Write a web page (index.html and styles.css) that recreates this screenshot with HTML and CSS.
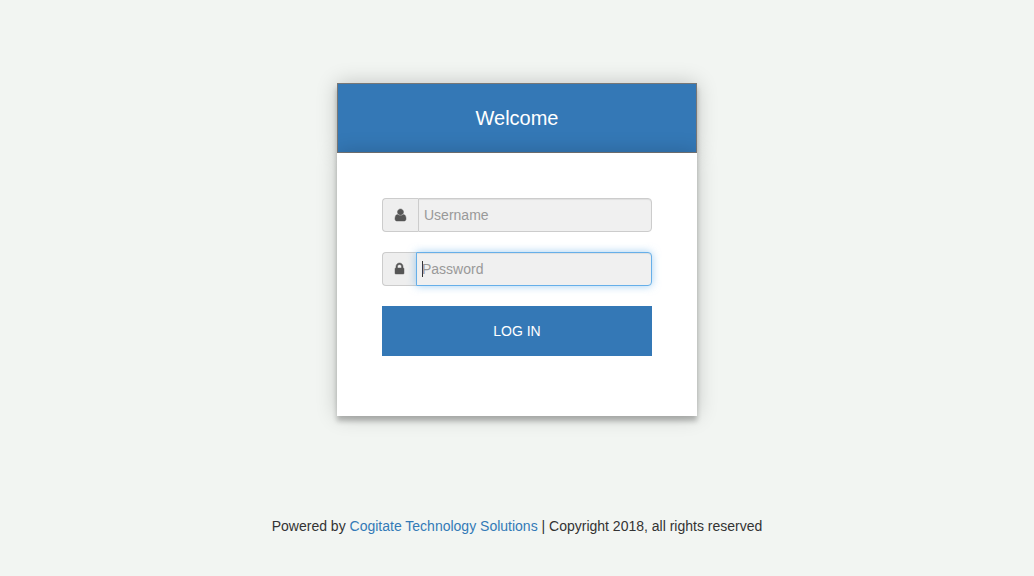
FILE: index.html
```html
<!DOCTYPE html>
<html lang="en">
<head>
<meta charset="utf-8">
<meta name="viewport" content="width=device-width, initial-scale=1">
<title>Welcome</title>
<link rel="stylesheet" href="styles.css">
</head>
<body>
<main class="login">
  <h1 class="login-header">Welcome</h1>
  <form class="login-form">
    <div class="field">
      <label class="addon" for="username" aria-label="Username">
        <svg class="icon-user" viewBox="192 128 1408 1536" aria-hidden="true"><path d="M1600 1405q0 120-73 189.500t-194 69.500h-874q-121 0-194-69.500t-73-189.500q0-53 3.500-103.500t14-109 26.500-108.500 43-97.500 62-81 85.500-53.500 111.500-20q9 0 42 21.500t74.500 48 108 48 133.500 21.500 133.500-21.500 108-48 74.500-48 42-21.500q61 0 111.500 20t85.500 53.500 62 81 43 97.500 26.500 108.500 14 109 3.500 103.500zm-320-893q0 159-112.500 271.500t-271.500 112.500-271.500-112.500-112.500-271.500 112.500-271.500 271.500-112.500 271.500 112.500 112.500 271.500z"/></svg>
      </label>
      <input class="control" id="username" type="text" placeholder="Username">
    </div>
    <div class="field">
      <label class="addon" for="password" aria-label="Password">
        <svg class="icon-lock" viewBox="320 128 1152 1408" aria-hidden="true"><path d="M640 768h512v-192q0-106-75-181t-181-75-181 75-75 181v192zm832 96v576q0 40-28 68t-68 28h-960q-40 0-68-28t-28-68v-576q0-40 28-68t68-28h32v-192q0-184 132-316t316-132 316 132 132 316v192h32q40 0 68 28t28 68z"/></svg>
      </label>
      <input class="control" id="password" type="password" placeholder="Password" autofocus>
    </div>
    <button class="submit" type="submit">LOG IN</button>
  </form>
</main>
<footer class="footer">Powered by <a class="footer-link" href="#">Cogitate Technology Solutions</a> | Copyright 2018, all rights reserved</footer>
</body>
</html>
```
FILE: styles.css
```css
* {
  box-sizing: border-box;
}

body {
  margin: 0;
  padding: 83px 16px 40px;
  background: #f2f5f2;
  color: #333;
  font: 14px/20px "Liberation Sans", Arial, sans-serif;
}

.login {
  max-width: 360px;
  margin: 0 auto 100px;
}

.login-header,
.login-form {
  box-shadow: 0 0 20px rgba(0, 0, 0, 0.2), 0 5px 5px rgba(0, 0, 0, 0.24);
}

.login-header {
  margin: 0;
  padding: 24px 16px;
  border: 1px solid #777;
  background: #3478b6;
  color: #fff;
  font-size: 20px;
  font-weight: 400;
  line-height: 20px;
  text-align: center;
}

.login-form {
  display: flex;
  flex-direction: column;
  gap: 20px;
  padding: 45px 45px 60px;
  background: #fff;
}

.field {
  display: flex;
  height: 34px;
}

.addon {
  display: flex;
  align-items: center;
  padding: 0 12px;
  border: 1px solid #ccc;
  border-right: 0;
  border-radius: 4px 0 0 4px;
  background: #eee;
}

.icon-user,
.icon-lock {
  display: block;
  overflow: visible;
  fill: #555;
  stroke: #555;
  stroke-width: 60;
}

.icon-user {
  width: 11px;
  height: 12px;
}

.icon-lock {
  width: 9px;
  height: 11px;
  margin-bottom: 1px;
}

.control {
  flex: 1;
  min-width: 0;
  padding: 0 5px;
  border: 1px solid #ccc;
  border-radius: 0 4px 4px 0;
  outline: 0;
  background: #f0f0f0;
  box-shadow: inset 0 1px 1px rgba(0, 0, 0, 0.075);
  color: #333;
  font: inherit;
}

.control::placeholder {
  color: #999;
  opacity: 1;
}

.control:focus {
  border-color: #66afe9;
  box-shadow: inset 0 1px 1px rgba(0, 0, 0, 0.075), 0 0 8px rgba(102, 175, 233, 0.6);
}

/* Steady caret while the focused field is empty */
.control:focus:placeholder-shown {
  background: #f0f0f0 linear-gradient(#333, #333) 5px center / 1px 16px no-repeat;
  caret-color: transparent;
}

.submit {
  padding: 15px;
  border: 0;
  border-radius: 0;
  background: #3478b6;
  color: #fff;
  font: inherit;
  cursor: pointer;
}

.footer {
  padding: 0 16px;
  text-align: center;
}

.footer-link {
  color: #337ab7;
  text-decoration: none;
}
```
